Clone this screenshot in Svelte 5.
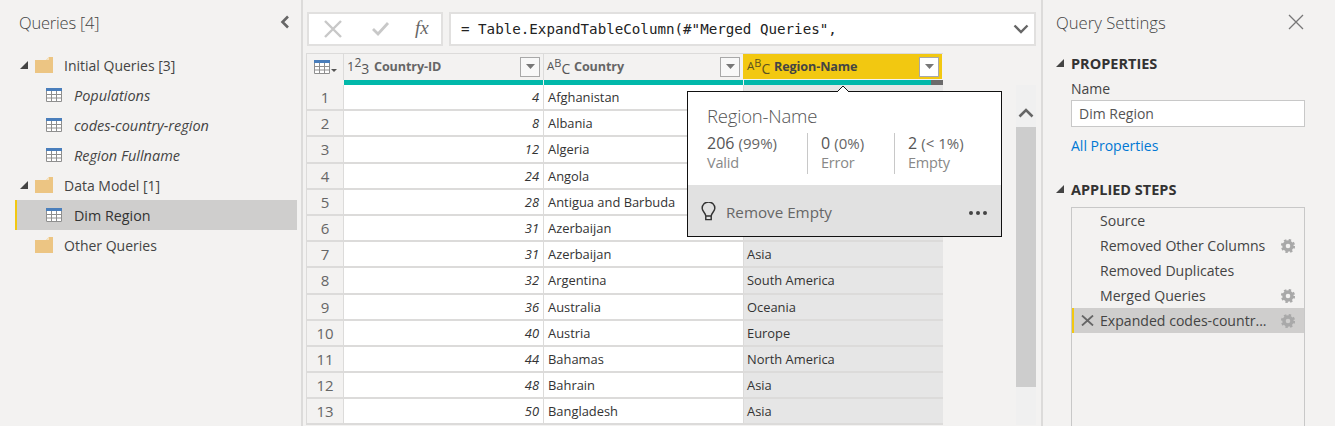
<script>
  let queries = [
    { type: "folder", name: "Initial Queries [3]", open: true },
    { type: "table", name: "Populations", italic: true },
    { type: "table", name: "codes-country-region", italic: true },
    { type: "table", name: "Region Fullname", italic: true },
    { type: "folder", name: "Data Model [1]", open: true },
    { type: "table", name: "Dim Region", active: true },
    { type: "folder", name: "Other Queries" },
  ];

  let rows = [
    [4, "Afghanistan", ""],
    [8, "Albania", ""],
    [12, "Algeria", ""],
    [24, "Angola", ""],
    [28, "Antigua and Barbuda", ""],
    [31, "Azerbaijan", ""],
    [31, "Azerbaijan", "Asia"],
    [32, "Argentina", "South America"],
    [36, "Australia", "Oceania"],
    [40, "Austria", "Europe"],
    [44, "Bahamas", "North America"],
    [48, "Bahrain", "Asia"],
    [50, "Bangladesh", "Asia"],
  ];

  let steps = [
    { name: "Source" },
    { name: "Removed Other Columns", gear: true },
    { name: "Removed Duplicates" },
    { name: "Merged Queries", gear: true },
    { name: "Expanded codes-countr...", gear: true, active: true },
  ];

  let stats = [
    { n: "206", pct: "(99%)", label: "Valid" },
    { n: "0", pct: "(0%)", label: "Error" },
    { n: "2", pct: "(< 1%)", label: "Empty" },
  ];
</script>

{#snippet tableIcon()}
  <svg class="tableicon" width="16" height="14" viewBox="0 0 16 14">
    <rect width="16" height="14" fill="#fff" />
    <rect width="16" height="3" fill="#4a7ebb" />
    <path d="M.5 3v10.5h15V3M5.5 3v10.5M10.5 3v10.5M.5 6.5h15M.5 10h15" fill="none" stroke="#8f8f8f" />
  </svg>
{/snippet}

{#snippet folderIcon()}
  <svg class="foldericon" width="18" height="16" viewBox="0 0 18 16">
    <path d="M0 3h11l3-3h4v16H0z" fill="#ecc583" />
    <path d="M11 3l3-3v3z" fill="#f6e3c1" />
  </svg>
{/snippet}

{#snippet caret()}
  <svg class="caret" width="8" height="8" viewBox="0 0 8 8"><path d="M8 0v8H0z" fill="#444" /></svg>
{/snippet}

{#snippet dropBtn()}
  <span class="dropbtn"><svg width="9" height="5" viewBox="0 0 9 5"><path d="M0 0h9L4.500 5z" fill="#777" /></svg></span>
{/snippet}

{#snippet abc()}
  <span class="typeicon"><span>A</span><span class="up">B</span><span class="down">C</span></span>
{/snippet}

{#snippet gear()}
  <svg class="gear" width="14" height="14" viewBox="0 0 14 14">
    <circle cx="7" cy="7" r="4" fill="none" stroke="#a9a9a9" stroke-width="3.400" />
    <circle cx="7" cy="7" r="6" fill="none" stroke="#a9a9a9" stroke-width="2.200" stroke-dasharray="2.400 2.310" />
  </svg>
{/snippet}

<div class="page">
  <aside class="queries">
    <div class="pane-head">
      <span class="pane-title">Queries [4]</span>
      <svg width="10" height="14" viewBox="0 0 10 14"><path d="M8 1.500L2.500 7 8 12.500" fill="none" stroke="#666" stroke-width="2.600" /></svg>
    </div>
    <ul class="tree">
      {#each queries as q}
        <li class="node {q.type}" class:active={q.active} class:italic={q.italic}>
          {#if q.type === "folder"}
            <span class="caretbox">{#if q.open}{@render caret()}{/if}</span>
            {@render folderIcon()}
          {:else}
            {@render tableIcon()}
          {/if}
          <span>{q.name}</span>
        </li>
      {/each}
    </ul>
  </aside>

  <main class="center">
    <div class="formula">
      <div class="fbtns">
        <svg width="20" height="18" viewBox="0 0 20 18"><path d="M2 1l16 16M18 1L2 17" stroke="#c8c8c8" stroke-width="2.400" fill="none" /></svg>
        <svg width="18" height="14" viewBox="0 0 18 14"><path d="M1 7l5 5L16 1" stroke="#c8c8c8" stroke-width="2.800" fill="none" /></svg>
        <span class="fx">fx</span>
      </div>
      <div class="finput">
        <span>= Table.ExpandTableColumn(#"Merged Queries",</span>
        <svg width="16" height="10" viewBox="0 0 16 10"><path d="M1.500 1.500L8 8l6.500-6.500" fill="none" stroke="#666" stroke-width="2.400" /></svg>
      </div>
    </div>

    <div class="gridwrap">
      <div class="grid">
        <div class="thead">
          <div class="corner">
            <svg width="18" height="14" viewBox="0 0 18 14">
              <rect width="16" height="14" fill="#fff" />
              <rect width="16" height="3" fill="#4a7ebb" />
              <path d="M.5 3v10.500h15V3M5.500 3v10.500M10.500 3v10.500M.5 6.500h15M.5 10h15" fill="none" stroke="#8f8f8f" />
            </svg>
            <svg class="mini" width="6" height="3" viewBox="0 0 6 3"><path d="M0 0h6L3 3z" fill="#555" /></svg>
          </div>
          <div class="th">
            <span class="typeicon num"><span>1</span><span class="up">2</span><span class="down">3</span></span>
            <span class="thname">Country-ID</span>
            {@render dropBtn()}
          </div>
          <div class="th">
            {@render abc()}
            <span class="thname">Country</span>
            {@render dropBtn()}
          </div>
          <div class="th sel">
            {@render abc()}
            <span class="thname">Region-Name</span>
            {@render dropBtn()}
          </div>
        </div>
        <div class="quality">
          <div class="qcorner"></div>
          <div class="qbar"></div>
          <div class="qbar"></div>
          <div class="qbar last"><i></i></div>
        </div>
        {#each rows as r, i}
          <div class="tr">
            <div class="rownum">{i + 1}</div>
            <div class="td id">{r[0]}</div>
            <div class="td">{r[1]}</div>
            <div class="td shade">{r[2]}</div>
          </div>
        {/each}
      </div>

      <div class="scrollbar">
        <div class="arrow">
          <svg width="16" height="10" viewBox="0 0 16 10"><path d="M1.500 8.500L8 2l6.500 6.500" fill="none" stroke="#666" stroke-width="2.600" /></svg>
        </div>
        <div class="thumb"></div>
      </div>

      <div class="popup">
        <svg class="notch" width="12" height="7" viewBox="0 0 12 7"><path d="M0 7l6-6 6 6" fill="#fff" stroke="#111" /></svg>
        <div class="popbody">
          <div class="poptitle">Region-Name</div>
          <div class="stats">
            {#each stats as s}
              <div class="stat">
                <div class="statval">{s.n} <small>{s.pct}</small></div>
                <div class="statlabel">{s.label}</div>
              </div>
            {/each}
          </div>
        </div>
        <div class="popfoot">
          <svg width="15" height="19" viewBox="0 0 16 21">
            <path d="M5 15.500C5 12 1 10.500 1 7a7 7 0 0 1 14 0c0 3.500-4 5-4 8.500zM5 15.500V19.500h6v-4" fill="none" stroke="#333" stroke-width="1.600" />
          </svg>
          <span class="fix">Remove Empty</span>
          <span class="dots"><i></i><i></i><i></i></span>
        </div>
      </div>
    </div>
  </main>

  <aside class="settings">
    <div class="pane-head">
      <span class="pane-title">Query Settings</span>
      <svg width="16" height="16" viewBox="0 0 16 16"><path d="M1 1l14 14M15 1L1 15" stroke="#777" stroke-width="1.300" fill="none" /></svg>
    </div>
    <div class="section">{@render caret()}<h2>PROPERTIES</h2></div>
    <div class="props">
      <label for="qname">Name</label>
      <input id="qname" value="Dim Region" />
      <a href="#props">All Properties</a>
    </div>
    <div class="section steps-head">{@render caret()}<h2>APPLIED STEPS</h2></div>
    <ul class="steps">
      {#each steps as s}
        <li class:active={s.active}>
          <span class="x">
            {#if s.active}
              <svg width="13" height="11" viewBox="0 0 13 11"><path d="M1 .5l11 10M12 .5L1 10.500" stroke="#666" stroke-width="1.800" fill="none" /></svg>
            {/if}
          </span>
          <span class="stepname">{s.name}</span>
          {#if s.gear}{@render gear()}{/if}
        </li>
      {/each}
    </ul>
  </aside>
</div>

<style>
  :global(body) {
    margin: 0;
    background: #f3f2f1;
  }
  .page {
    display: flex;
    width: 1335px;
    height: 426px;
    overflow: hidden;
    font-family: "Open Sans", "Noto Sans", sans-serif;
    color: #333;
    background: #f3f2f1;
  }
  ul {
    list-style: none;
    margin: 0;
    padding: 0;
  }
  .queries {
    width: 301px;
    flex: none;
    border-right: 2px solid #dcdbda;
  }
  .pane-head {
    display: flex;
    justify-content: space-between;
    align-items: center;
    height: 24px;
    padding-top: 10px;
  }
  .queries .pane-head {
    padding: 10px 11px 0 19px;
  }
  .pane-title {
    font-size: 16.5px;
    font-weight: 300;
    color: #444;
    letter-spacing: -0.2px;
  }
  .settings .pane-title {
    letter-spacing: 0;
    font-size: 16.7px;
  }
  .tree {
    margin-top: 16px;
    width: 297px;
  }
  .node {
    display: flex;
    align-items: center;
    height: 30px;
    font-size: 14px;
    color: #444;
    border-left: 2px solid transparent;
    margin-left: 15px;
    box-sizing: border-box;
  }
  .node.folder {
    padding-left: 3px;
  }
  .node.table {
    padding-left: 29px;
  }
  .node.italic {
    font-style: italic;
    font-size: 14.5px;
  }
  .node.active {
    background: #cfcecd;
    border-left-color: #f2c811;
    color: #333;
    font-size: 14.3px;
  }
  .caretbox {
    width: 15px;
    display: flex;
    flex: none;
  }
  .foldericon {
    margin-right: 11px;
    flex: none;
  }
  .tableicon {
    margin-right: 12px;
    flex: none;
  }

  .center {
    flex: 1;
    min-width: 0;
    padding: 12px 5px 0 4px;
  }
  .formula {
    display: flex;
    gap: 6px;
    height: 34px;
  }
  .fbtns {
    width: 136px;
    box-sizing: border-box;
    background: #fff;
    border: 2px solid #e1e0df;
    display: flex;
    align-items: center;
    padding-left: 14px;
  }
  .fbtns svg + svg {
    margin-left: 29px;
  }
  .fx {
    font-family: "Liberation Serif", serif;
    font-style: italic;
    font-size: 19px;
    color: #666;
    margin-left: 25px;
    margin-top: -3px;
  }
  .finput {
    flex: 1;
    box-sizing: border-box;
    background: #fff;
    border: 2px solid #e1e0df;
    display: flex;
    align-items: center;
    justify-content: space-between;
    padding: 0 5px 0 10px;
    font-family: "DejaVu Sans Mono", "Liberation Mono", monospace;
    font-size: 14.2px;
    color: #222;
  }

  .gridwrap {
    position: relative;
    display: flex;
    margin-top: 7px;
  }
  .grid {
    width: 636px;
    flex: none;
    font-size: 12.9px;
    border-left: 1px solid #dcdbda;
    margin-left: -1px;
    box-shadow: inset 0 1px 0 #dcdbda;
  }
  .thead {
    display: flex;
    height: 27px;
  }
  .corner {
    width: 36px;
    flex: none;
    box-sizing: border-box;
    display: flex;
    align-items: center;
    padding-left: 7px;
  }
  .corner svg:first-child {
    margin-right: -1px;
  }
  .mini {
    margin-top: 8px;
  }
  .th {
    width: 200px;
    flex: none;
    box-sizing: border-box;
    border-left: 1px solid #dcdbda;
    display: flex;
    align-items: center;
    padding: 0 3px;
    font-weight: 700;
    color: #666;
    letter-spacing: -0.1px;
  }
  .th.sel {
    background: #f2c811;
    color: #444;
    width: 199px;
    border-left-color: #f2c811;
    margin: 1px 0;
  }
  .thname {
    flex: 1;
    margin-left: 6px;
    font-size: 12.6px;
  }
  .typeicon {
    display: inline-flex;
    font-size: 11.5px;
    font-weight: 500;
    line-height: 1;
    letter-spacing: 0;
    color: #555;
    width: 21px;
    flex: none;
  }
  .th.sel .typeicon {
    color: #5c5320;
  }
  .typeicon .up {
    font-size: 11px;
    transform: translateY(-3px);
  }
  .typeicon .down {
    font-size: 14px;
    transform: translateY(2px);
  }
  .typeicon.num {
    font-size: 13px;
  }
  .typeicon.num .up {
    font-size: 12px;
  }
  .dropbtn {
    width: 20px;
    height: 20px;
    box-sizing: border-box;
    flex: none;
    border: 1px solid #a8a8a8;
    background: #f8f8f8;
    display: flex;
    align-items: center;
    justify-content: center;
  }
  .th.sel .dropbtn {
    background: #fff;
  }
  .quality {
    display: flex;
    height: 5px;
  }
  .qcorner {
    width: 37px;
    flex: none;
  }
  .qbar {
    width: 199px;
    flex: none;
    margin-right: 1px;
    background: #01b8aa;
    position: relative;
  }
  .qbar.last {
    margin-right: 0;
  }
  .qbar i {
    position: absolute;
    right: 0;
    top: 0;
    bottom: 0;
    width: 12px;
    background: #6b6b6b;
  }
  .tr {
    display: flex;
    height: 26.2px;
    box-sizing: border-box;
    border-bottom: 2px solid #dcdbda;
  }
  .rownum {
    width: 36px;
    flex: none;
    text-align: center;
    font-size: 15px;
    color: #666;
    line-height: 25.5px;
    border-right: 1px solid #dcdbda;
  }
  .td {
    width: 200px;
    flex: none;
    box-sizing: border-box;
    background: #fff;
    border-right: 1px solid #dcdbda;
    padding: 0 4px;
    line-height: 25.5px;
    white-space: nowrap;
    color: #333;
  }
  .td.id {
    text-align: right;
    font-style: italic;
  }
  .td.shade {
    background: #e6e6e6;
    width: 199px;
    border-right: 0;
    padding-left: 3px;
  }

  .scrollbar {
    margin-left: 73px;
    width: 20px;
    flex: none;
    margin-top: 32px;
    background: #f0f0f0;
    height: 340px;
  }
  .arrow {
    height: 42px;
    display: flex;
    justify-content: center;
    align-items: center;
    padding-top: 14px;
    box-sizing: border-box;
  }
  .thumb {
    height: 260px;
    background: #cdcdcd;
  }

  .popup {
    position: absolute;
    left: 380px;
    top: 38px;
    width: 315px;
    height: 146px;
    box-sizing: border-box;
    border: 1px solid #111;
    background: #fff;
  }
  .notch {
    position: absolute;
    left: 149px;
    top: -7px;
  }
  .popbody {
    height: 93px;
    box-sizing: border-box;
    padding: 13px 19px 0;
  }
  .poptitle {
    font-size: 18.5px;
    font-weight: 300;
    color: #555;
    letter-spacing: -0.2px;
    line-height: 22px;
  }
  .stats {
    display: flex;
    margin-top: 6px;
  }
  .stat {
    height: 41px;
    border-left: 1px solid #c8c8c8;
    padding-left: 13px;
    width: 73px;
  }
  .stat:first-child {
    border-left: 0;
    padding-left: 0;
    width: 100px;
  }
  .statval {
    font-size: 16px;
    line-height: 20px;
    color: #555;
    white-space: nowrap;
  }
  .statval small {
    font-size: 15px;
    color: #666;
  }
  .statlabel {
    font-size: 14.5px;
    line-height: 20px;
    color: #888;
    letter-spacing: -0.2px;
  }
  .popfoot {
    height: 51px;
    box-sizing: border-box;
    padding: 2px 14px 0 13px;
    background: #e1e1e1;
    display: flex;
    align-items: center;
  }
  .fix {
    flex: 1;
    margin-left: 10px;
    font-size: 15.2px;
    color: #666;
  }
  .dots {
    display: flex;
    gap: 3px;
    margin-top: 2px;
  }
  .dots i {
    width: 4px;
    height: 4px;
    border-radius: 50%;
    background: #444;
  }

  .settings {
    width: 294px;
    flex: none;
    box-sizing: border-box;
    border-left: 2px solid #dcdbda;
    padding-left: 13px;
  }
  .settings .pane-head {
    padding-right: 31px;
  }
  .section {
    display: flex;
    align-items: center;
    height: 20px;
    margin-top: 19px;
  }
  .section h2 {
    margin: 0 0 0 7px;
    font-size: 14.5px;
    font-weight: 700;
    color: #333;
  }
  .steps-head {
    margin-top: 24px;
  }
  .props {
    padding-left: 15px;
    width: 234px;
  }
  .props label {
    display: block;
    font-size: 14px;
    color: #444;
    line-height: 20px;
    margin-top: 6px;
  }
  .props input {
    display: block;
    box-sizing: border-box;
    width: 234px;
    height: 27px;
    margin-top: 1px;
    border: 1px solid #c8c8c8;
    background: #fff;
    font: 14px "Open Sans", sans-serif;
    color: #555;
    padding: 0 7px;
    border-radius: 0;
  }
  .props a {
    display: block;
    margin-top: 9px;
    font-size: 14px;
    color: #0078d4;
    text-decoration: none;
  }
  .steps {
    margin: 8px 0 0 15px;
    width: 234px;
    height: 300px;
    box-sizing: border-box;
    border: 1px solid #c8c8c8;
  }
  .steps li {
    display: flex;
    align-items: center;
    height: 25px;
    font-size: 14.1px;
    color: #444;
    padding-right: 9px;
    border-left: 2px solid transparent;
    white-space: nowrap;
  }
  .steps li.active {
    background: #cfcecd;
    border-left-color: #f2c811;
  }
  .x {
    width: 26px;
    flex: none;
    display: flex;
    padding-left: 7px;
    box-sizing: border-box;
  }
  .stepname {
    flex: 1;
  }
  .gear {
    flex: none;
  }
</style>
